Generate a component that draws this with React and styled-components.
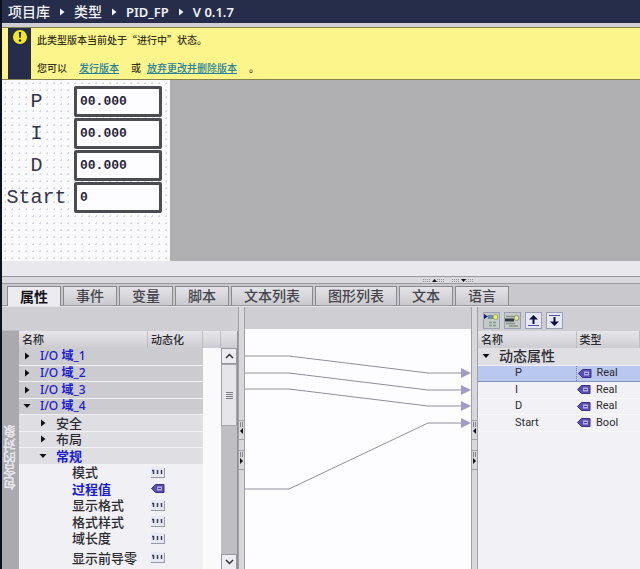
import React, { useState } from 'react';
import styled, { createGlobalStyle } from 'styled-components';

const GlobalStyle = createGlobalStyle`
    * {
        box-sizing: border-box;
    }

    body {
        margin: 0;
        font-family: "Noto Sans", "Noto Sans CJK SC", sans-serif;
        font-size: 12px;
        color: #2b2b30;
        background: #d0d0d4;
    }

    button, input {
        font-family: inherit;
    }
`;

const Page = styled.div`
    display: flex;
    flex-direction: column;
    min-height: 100vh;
    border-left: 2px solid #0b0f22;
    overflow: hidden;
`;

const Breadcrumb = styled.nav`
    display: flex;
    align-items: center;
    gap: 8px;
    height: 23px;
    padding-left: 6px;
    background: #262d4a;
    color: #f0f1f6;
    line-height: 22px;
    white-space: nowrap;
`;

const Crumb = styled.span`
    font-size: ${props => props.$latin ? '13px' : '14px'};
    font-weight: ${props => props.$latin ? 600 : 500};
`;

const Banner = styled.section`
    display: flex;
    height: 53px;
    margin-top: 4px;
    padding-left: 6px;
    background: #fbf58c;
    border-top: 1px solid #85844f;
    border-bottom: 1px solid #85844f;
    font-family: "Noto Sans CJK SC", sans-serif;
    font-size: 10px;
    font-weight: 500;
    color: #35341c;
`;

const BannerIcon = styled.div`
    flex: 0 0 23px;
    padding-top: 1px;
    background: #262d4a;
    text-align: center;
    line-height: 0;
`;

const BannerText = styled.div`
    display: flex;
    flex-direction: column;
    justify-content: space-between;
    padding: 4px 6px 3px;

    p {
        display: flex;
        margin: 0;
        line-height: 16px;
    }

    a {
        margin: 0 12px;
        color: #2583a0;
        text-decoration: underline;
    }

    span + a {
        margin-left: 6px;
    }
`;

const Screen = styled.main`
    display: flex;
    height: 181px;
    background: #b0b0b3;
`;

const Faceplate = styled.form`
    flex: 0 0 168px;
    display: flex;
    flex-direction: column;
    gap: 1px;
    padding-top: 6px;
    background-color: #fafafd;
    background-image: radial-gradient(circle, #d6d6e0 1px, transparent 1px);
    background-size: 7px 7px;
`;

const Field = styled.label`
    display: grid;
    grid-template-columns: 69px 88px;
    gap: 3px;
    align-items: center;
    height: 31px;
    font-family: "Liberation Mono", monospace;
    font-size: 20px;
    line-height: 24px;
    text-align: center;
    color: #35354a;

    input {
        width: 100%;
        height: 31px;
        padding: 0 0 0 3px;
        border: 3px solid #4b4b52;
        border-radius: 2px;
        background: #fdfdff;
        color: #25253a;
        font-family: "Liberation Mono", monospace;
        font-size: 13px;
        font-weight: bold;
    }
`;

const ScreenFooter = styled.div`
    height: 15px;
    background: #e9e9ed;
`;

const HSplitter = styled.div`
    display: flex;
    align-items: center;
    gap: 7px;
    height: 8px;
    padding-left: 66%;
    background: #dadade;
    border-top: 1px solid #98989e;
    border-bottom: 1px solid #98989e;
`;

const Tabs = styled.div`
    display: flex;
    gap: 2px;
    height: 22px;
    padding: 2px 5px 0;
    background: #c9c9cd;
    border-bottom: 1px solid #96969b;
`;

const Tab = styled.button`
    height: ${props => props.$active ? '20px' : '19px'};
    padding: 0 12px;
    border: 1px solid #88888d;
    border-bottom: none;
    background: ${props => props.$active ? '#ececf0' : 'linear-gradient(#e4e4e8, #cacace)'};
    color: ${props => props.$active ? '#141418' : '#45454b'};
    font-size: 14px;
    font-weight: ${props => props.$active ? 700 : 500};
    line-height: 16px;
    white-space: nowrap;
`;

const Workspace = styled.div`
    flex: 1;
    display: grid;
    grid-template-columns: 219px 17px 7px minmax(0, 1fr) 7px 162px;
    background: #cfcfd3;
    border-top: 1px solid #e4e4e8;
`;

const Column = styled.div`
    display: flex;
    flex-direction: column;
    min-width: 0;
    padding-top: ${props => props.$top || 0}px;
`;

const TreePanel = styled.div`
    flex: 1;
    display: flex;
    background: #f0f0f5;
`;

const SideLabel = styled.div`
    flex: 0 0 17px;
    padding-top: 79px;
    background: #a9a9ae;
    color: #e6e6ec;
    font-size: 13px;
    font-weight: 700;
    line-height: 17px;
    writing-mode: vertical-rl;
    transform: rotate(180deg);
`;

const Grid = styled.table`
    width: 100%;
    height: max-content;
    border-collapse: collapse;
    table-layout: fixed;

    th {
        height: 17px;
        padding: 0 0 0 3px;
        background: linear-gradient(#e6e6ea, #cdcdd1);
        border-right: 1px solid #bcbcc1;
        font-size: 11px;
        font-weight: 500;
        line-height: 14px;
        text-align: left;
    }

    td {
        height: 17px;
        padding: 0;
        line-height: 14px;
        white-space: nowrap;
    }

    tbody tr:nth-child(even) td {
        height: 16px;
    }

    td svg {
        display: block;
    }
`;

const rowColors = ['#cbcbd0', '#dfdfe3', '#f0f0f5'];

const TreeRow = styled.tr`
    td {
        background: ${props => rowColors[props.$tone]};
        border-bottom: 1px solid #f2f2f6;
    }

    td + td {
        padding-left: 3px;
    }

    td:last-child {
        background: #fafafd;
        border-bottom: none;
    }
`;

const LastRow = styled(TreeRow)`
    &&& td {
        height: 23px;
    }
`;

const Name = styled.div`
    display: flex;
    align-items: center;
    gap: 7px;
    padding-left: ${props => 2 + props.$level * 16}px;
    color: ${props => props.$blue ? '#1c1cd0' : '#2b2b30'};
    font-size: ${props => props.$level ? '13px' : '12px'};
    font-weight: ${props => props.$blue && props.$level ? 700 : 500};

    b {
        font-weight: 700;
    }
`;

const GroupName = styled.span`
    font-size: 14px;
`;

const Toggle = styled.button`
    display: grid;
    place-items: center;
    width: 12px;
    height: 12px;
    padding: 0;
    border: none;
    background: none;
`;

const Spacer = styled.span`
    width: 12px;
`;

const ScrollBar = styled.div`
    flex: 1;
    display: flex;
    flex-direction: column;
    background: #bebec3;
    border-right: 1px solid #909096;
`;

const ScrollHead = styled.div`
    height: 17px;
    background: linear-gradient(#e6e6ea, #cdcdd1);
`;

const ScrollButton = styled.button`
    display: grid;
    place-items: center;
    height: 16px;
    padding: 0;
    border: 1px solid #98989e;
    background: #ededf1;

    &:last-child {
        margin-top: auto;
    }
`;

const Thumb = styled.div`
    display: grid;
    place-items: center;
    height: 62px;
    border: 1px solid #a5a5aa;
    background: #e6e6ea;
`;

const VSplitter = styled.div`
    display: flex;
    flex-direction: column;
    align-items: center;
    gap: 10px;
    padding-top: 113px;
    background: #d8d8dc;
    border-left: 1px solid #a0a0a6;
    border-right: 1px solid #a0a0a6;
`;

const Wiring = styled.div`
    flex: 1;
    background: #fdfdff;

    svg {
        display: block;
        width: 100%;
    }
`;

const Toolbar = styled.div`
    display: flex;
    gap: 4px;
    height: 24px;
    padding: 5px 5px 0;
`;

const ToolButton = styled.button`
    width: 17px;
    height: 17px;
    padding: 0;
    border: 1px solid #9a9fb4;
    background: ${props => props.$dim ? '#c6cac6' : '#e6e8f8'};
    line-height: 0;
`;

const Interface = styled.div`
    flex: 1;
    background: #f1f1f6;
`;

const PropRow = styled.tr`
    td {
        background: ${props => props.$selected ? '#b9c8ee' : '#f1f1f6'};
        border-bottom: 1px solid ${props => props.$selected ? '#8593c2' : '#f8f8fb'};
        font-family: Roboto, "Noto Sans CJK SC", sans-serif;
        font-size: 11px;
    }

    td:first-child {
        padding-left: 37px;
        border-right: ${props => props.$selected ? '1px dotted #7681a8' : 'none'};
    }
`;

const GroupRow = styled.tr`
    td {
        background: #dedee3;
        border-bottom: 1px solid #f0f0f4;
    }
`;

const TypeCell = styled.div`
    display: flex;
    align-items: center;
    gap: 5px;
    padding-left: 1px;
`;

const Triangle = ({ open, color = '#111' }) => (
    <svg width="8" height="8" viewBox="0 0 8 8" aria-hidden="true">
        <path d={open ? 'M0.500 2h7L4 6z' : 'M2 0.500v7l4.500-3.500z'} fill={color} />
    </svg>
);

const Tag = () => (
    <svg width="14" height="9" viewBox="0 0 14 9" aria-hidden="true">
        <path d="M0.5 4.5L4.5 0.5H13V8.5H4.5z" fill="#5b4fb4" stroke="#3c2f8a" />
        <rect x="6" y="2.5" width="5" height="4" fill="#b3acec" />
        <path d="M7 4.5h3" stroke="#4c40a0" />
    </svg>
);

const StaticValue = () => (
    <svg width="14" height="11" viewBox="0 0 14 11" aria-hidden="true">
        <rect width="14" height="10" fill="#e7e8f6" />
        <path d="M0 10.5h14M13.5 1v9" stroke="#9898b0" />
        <path d="M1 3.5h2M2.5 3v4M6.5 3v4M10.5 3v4" stroke="#3c3c55" strokeWidth="1.5" />
    </svg>
);

const Chevron = ({ up }) => (
    <svg width="9" height="6" viewBox="0 0 9 6" aria-hidden="true">
        <path d={up ? 'M1 5l3.500-3.500L8 5' : 'M1 1l3.500 3.500L8 1'} fill="none" stroke="#333" strokeWidth="1.500" />
    </svg>
);

const Grip = ({ down }) => (
    <svg width="22" height="5" viewBox="0 0 22 5" aria-hidden="true">
        <path d="M0 1.500h22M0 3.500h22" stroke="#95959a" strokeDasharray="1 1" />
        <rect x="8" width="6" height="5" fill="#dadade" />
        <path d={down ? 'M9 1h5l-2.500 3z' : 'M9 4h5l-2.500-3z'} fill="#111" />
    </svg>
);

const SideGrip = ({ right }) => (
    <svg width="5" height="20" viewBox="0 0 5 20" aria-hidden="true">
        <path d="M0 0.500h5M0 19.500h5" stroke="#a0a0a6" />
        <path d="M1.500 2v5M3.500 2v5" stroke="#85858a" />
        <path d={right ? 'M1 8v6l3-3z' : 'M4 8v6l-3-3z'} fill="#111" />
    </svg>
);

const WarningIcon = () => (
    <svg width="16" height="16" viewBox="0 0 16 16" aria-hidden="true">
        <circle cx="8" cy="8" r="7" fill="#f7ea1c" />
        <path d="M6.800 3h2.400l-.5 6H7.300z" fill="#26263a" />
        <circle cx="8" cy="11.500" r="1.300" fill="#26263a" />
    </svg>
);

const AddRowIcon = () => (
    <svg width="15" height="15" viewBox="0 0 15 15" aria-hidden="true">
        <path d="M0 1l4 2.500L0 6z" fill="#10207a" />
        <rect x="4" y="2" width="7" height="4" fill="#6c88ac" />
        <circle cx="11.500" cy="4" r="2.500" fill="#e8ee76" stroke="#96a848" />
        <path d="M5 9.500h7M5 12.500h7" stroke="#7f9c92" strokeWidth="1.500" strokeDasharray="3 1" />
    </svg>
);

const InsertRowIcon = () => (
    <svg width="15" height="15" viewBox="0 0 15 15" aria-hidden="true">
        <path d="M1 3.500h10M1 10.500h9M4 13h9" stroke="#86928a" strokeWidth="1.500" />
        <path d="M0 7h9" stroke="#30363c" strokeWidth="3" />
        <circle cx="11.500" cy="5" r="2.500" fill="#dfe2a0" stroke="#8f9868" />
    </svg>
);

const UpIcon = () => (
    <svg width="15" height="15" viewBox="0 0 15 15" aria-hidden="true">
        <path d="M7.500 2L3 6.500h3.500V11h2V6.500H12z" fill="#10103c" />
        <path d="M2 12.500h11" stroke="#5252a8" />
    </svg>
);

const DownIcon = () => (
    <svg width="15" height="15" viewBox="0 0 15 15" aria-hidden="true">
        <path d="M7.500 13L3 8.500h3.500V4h2v4.500H12z" fill="#10103c" />
        <path d="M2 2.500h11" stroke="#5252a8" />
    </svg>
);

const fields = [
    ['P', '00.000'],
    ['I', '00.000'],
    ['D', '00.000'],
    ['Start', '0']
];

const tabs = ['属性', '事件', '变量', '脚本', '文本列表', '图形列表', '文本', '语言'];

const tree = [
    { name: 'I/O 域_1', io: 1, level: 0, tone: 0, blue: true, toggle: 'closed' },
    { name: 'I/O 域_2', io: 2, level: 0, tone: 0, blue: true, toggle: 'closed' },
    { name: 'I/O 域_3', io: 3, level: 0, tone: 0, blue: true, toggle: 'closed' },
    { name: 'I/O 域_4', io: 4, level: 0, tone: 0, blue: true, toggle: 'open' },
    { name: '安全', level: 1, tone: 1, toggle: 'closed' },
    { name: '布局', level: 1, tone: 1, toggle: 'closed' },
    { name: '常规', level: 1, tone: 1, blue: true, toggle: 'open' },
    { name: '模式', level: 2, tone: 2, value: 'static' },
    { name: '过程值', level: 2, tone: 2, blue: true, value: 'tag' },
    { name: '显示格式', level: 2, tone: 2, value: 'static' },
    { name: '格式样式', level: 2, tone: 2, value: 'static' },
    { name: '域长度', level: 2, tone: 2, value: 'static' },
    { name: '显示前导零', level: 2, tone: 2, value: 'static', last: true }
];

const interfaceProps = [
    ['P', 'Real'],
    ['I', 'Real'],
    ['D', 'Real'],
    ['Start', 'Bool']
];

// wires from the tree rows to the interface rows
const wires = [
    { from: 27, to: 44 },
    { from: 44, to: 61 },
    { from: 60, to: 77 },
    { from: 160, to: 94 }
];

const TreeItem = ({ item }) => {
    const Row = item.last ? LastRow : TreeRow;
    return (
        <Row $tone={item.tone}>
            <td>
                <Name $level={item.level} $blue={item.blue}>
                    {item.toggle
                        ? <Toggle aria-label={item.name}><Triangle open={item.toggle === 'open'} /></Toggle>
                        : <Spacer />}
                    {item.io ? <span>I/O <b>域</b>_{item.io}</span> : item.name}
                </Name>
            </td>
            <td>
                {item.value === 'static' && <StaticValue />}
                {item.value === 'tag' && <Tag />}
            </td>
            <td />
        </Row>
    );
};

const App = () => {
    const [activeTab, setActiveTab] = useState('属性');
    const [selected, setSelected] = useState('P');
    const [values, setValues] = useState(Object.fromEntries(fields));

    const handleChange = key => e => setValues({ ...values, [key]: e.target.value });

    return (
        <Page>
            <GlobalStyle />
            <Breadcrumb>
                <Crumb>项目库</Crumb>
                <Triangle color="#f0f1f6" />
                <Crumb>类型</Crumb>
                <Triangle color="#f0f1f6" />
                <Crumb $latin>PID_FP</Crumb>
                <Triangle color="#f0f1f6" />
                <Crumb $latin>V 0.1.7</Crumb>
            </Breadcrumb>
            <Banner>
                <BannerIcon><WarningIcon /></BannerIcon>
                <BannerText>
                    <p>此类型版本当前处于“进行中”状态。</p>
                    <p>
                        您可以<a href="#release">发行版本</a>
                        <span>或</span>
                        <a href="#discard">放弃更改并删除版本</a>。
                    </p>
                </BannerText>
            </Banner>
            <Screen>
                <Faceplate>
                    {fields.map(([name]) => (
                        <Field key={name}>
                            {name}
                            <input type="text" value={values[name]} onChange={handleChange(name)} />
                        </Field>
                    ))}
                </Faceplate>
            </Screen>
            <ScreenFooter />
            <HSplitter>
                <Grip />
                <Grip down />
            </HSplitter>
            <Tabs role="tablist">
                {tabs.map(tab => (
                    <Tab
                        key={tab}
                        role="tab"
                        aria-selected={tab === activeTab}
                        $active={tab === activeTab}
                        onClick={() => setActiveTab(tab)}>
                        {tab}
                    </Tab>
                ))}
            </Tabs>
            <Workspace>
                <Column $top={24}>
                    <TreePanel>
                        <SideLabel>包含的对象</SideLabel>
                        <Grid>
                            <colgroup>
                                <col />
                                <col width="55" />
                                <col width="18" />
                            </colgroup>
                            <thead>
                                <tr>
                                    <th>名称</th>
                                    <th>动态化</th>
                                    <th />
                                </tr>
                            </thead>
                            <tbody>
                                {tree.map(item => <TreeItem key={item.name} item={item} />)}
                            </tbody>
                        </Grid>
                    </TreePanel>
                </Column>
                <Column $top={24}>
                    <ScrollBar>
                        <ScrollHead />
                        <ScrollButton aria-label="向上"><Chevron up /></ScrollButton>
                        <Thumb>
                            <svg width="7" height="7" viewBox="0 0 7 7" aria-hidden="true">
                                <path d="M0 .5h7M0 2.500h7M0 4.500h7M0 6.500h7" stroke="#7c7c82" />
                            </svg>
                        </Thumb>
                        <ScrollButton aria-label="向下"><Chevron /></ScrollButton>
                    </ScrollBar>
                </Column>
                <VSplitter>
                    <SideGrip />
                    <SideGrip right />
                </VSplitter>
                <Column $top={22}>
                    <Wiring>
                        <svg viewBox="0 0 226 239" preserveAspectRatio="xMinYMin meet" aria-hidden="true">
                            {wires.map(({ from, to }) => (
                                <g key={from}>
                                    <path
                                        d={`M0 ${from}H44L183 ${to}H218`}
                                        fill="none"
                                        stroke="#8f8f98" />
                                    <path d={`M216 ${to - 5}v10l10-5z`} fill="#a19cc6" />
                                </g>
                            ))}
                        </svg>
                    </Wiring>
                </Column>
                <VSplitter>
                    <SideGrip />
                    <SideGrip right />
                </VSplitter>
                <Column>
                    <Toolbar>
                        <ToolButton $dim aria-label="添加属性"><AddRowIcon /></ToolButton>
                        <ToolButton $dim aria-label="插入属性"><InsertRowIcon /></ToolButton>
                        <ToolButton aria-label="上移"><UpIcon /></ToolButton>
                        <ToolButton aria-label="下移"><DownIcon /></ToolButton>
                    </Toolbar>
                    <Interface>
                        <Grid>
                            <colgroup>
                                <col width="98" />
                                <col />
                            </colgroup>
                            <thead>
                                <tr>
                                    <th>名称</th>
                                    <th>类型</th>
                                </tr>
                            </thead>
                            <tbody>
                                <GroupRow>
                                    <td colSpan="2">
                                        <Name $level={0}>
                                            <Toggle aria-label="动态属性"><Triangle open /></Toggle>
                                            <GroupName>动态属性</GroupName>
                                        </Name>
                                    </td>
                                </GroupRow>
                                {interfaceProps.map(([name, type]) => (
                                    <PropRow
                                        key={name}
                                        $selected={name === selected}
                                        onClick={() => setSelected(name)}>
                                        <td>{name}</td>
                                        <td><TypeCell><Tag />{type}</TypeCell></td>
                                    </PropRow>
                                ))}
                            </tbody>
                        </Grid>
                    </Interface>
                </Column>
            </Workspace>
        </Page>
    );
};

export default App;
